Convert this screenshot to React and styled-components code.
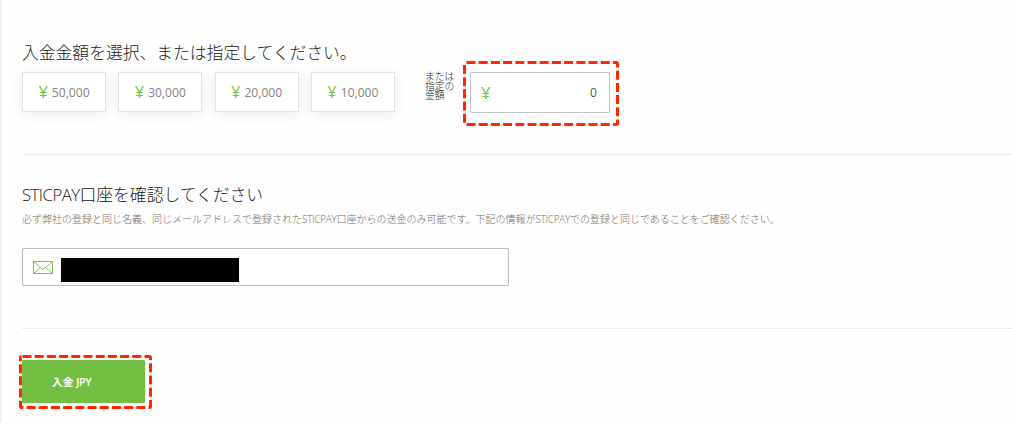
import React from "react"
import styled, { createGlobalStyle } from "styled-components"

const amounts = ["50,000", "30,000", "20,000", "10,000"]

const Outline = ({ width, height, x, y }) => (
  <OutlineSvg $x={x} $y={y} width={width} height={height}>
    <rect
      x="1.5"
      y="1.5"
      width={width - 3}
      height={height - 3}
      rx="1"
      fill="none"
      stroke="#ff2600"
      strokeWidth="3"
      strokeDasharray="9 3.2"
      strokeDashoffset="-1"
    />
  </OutlineSvg>
)

const App = () => {
  return (
    <Page>
      <GlobalStyle />
      <AmountSection>
        <Title>入金金額を選択、または指定してください。</Title>
        <AmountRow>
          {amounts.map(amount => (
            <AmountCard key={amount}>
              <Yen>¥</Yen>
              {amount}
            </AmountCard>
          ))}
          <OrLabel>
            または
            <br />
            指定の
            <br />
            金額
          </OrLabel>
          <AmountField>
            <Yen>¥</Yen>
            <AmountValue>0</AmountValue>
            <Outline x={-8} y={-12} width={156} height={65} />
          </AmountField>
        </AmountRow>
      </AmountSection>
      <AccountSection>
        <Title>
          <Latin $spacing="-0.55px">STICPAY</Latin>口座を確認してください
        </Title>
        <Note>
          必ず弊社の登録と同じ名義、同じメールアドレスで登録された
          <Latin>STICPAY</Latin>
          口座からの送金のみ可能です。下記の情報が
          <Latin>STICPAY</Latin>での登録と同じであることをご確認ください。
        </Note>
        <EmailField>
          <EmailIcon viewBox="0 0 20 13">
            <path d="M.5.5h19v12H.5zM.5.5l8 7q1.5 1.2 3 0l8-7M.5 12.5l7-6M19.5 12.5l-7-6" />
          </EmailIcon>
          <Redacted />
        </EmailField>
      </AccountSection>
      <SubmitSection>
        <SubmitButton>
          入金 <Latin $spacing="-0.4px" $weight={600}>JPY</Latin>
          <Outline x={-3} y={-5} width={133} height={54} />
        </SubmitButton>
      </SubmitSection>
    </Page>
  )
}

export default App

const GlobalStyle = createGlobalStyle`
  body {
    margin: 0;
    background: #fefefe;
    overflow: hidden;
  }
  * {
    box-sizing: border-box;
  }
`
const Page = styled.main`
  height: 423px;
  padding-left: 20px;
  border-left: 2px solid #f1f1f1;
  color: #222;
  font-family: "Open Sans", "Noto Sans CJK JP", sans-serif;
  font-weight: 300;
`
const AmountSection = styled.section`
  height: 155px;
  padding-top: 40px;
  border-bottom: 1px solid #ececec;
`
const Title = styled.h2`
  margin: 0;
  height: 25px;
  font-size: 16.8px;
  font-weight: 300;
  line-height: 25px;
  white-space: nowrap;
`
const AmountRow = styled.div`
  display: flex;
  align-items: flex-start;
  margin-top: 7px;
`
const AmountCard = styled.button`
  display: flex;
  align-items: center;
  justify-content: center;
  gap: 4px;
  width: 84px;
  height: 40px;
  margin: 0 12.3px 0 0;
  padding: 0;
  border: 1px solid #e2e3e5;
  background: #fff;
  box-shadow: 0 2px 13px rgba(0, 0, 0, 0.08);
  color: #858585;
  font-family: "Open Sans", sans-serif;
  font-size: 12.1px;
`
const Yen = styled.span`
  color: #72bf44;
  font-family: "Open Sans", sans-serif;
  font-size: 16.5px;
  font-weight: 400;
  line-height: 20px;
  transform: translateY(-0.5px);
`
const OrLabel = styled.div`
  width: 45px;
  margin-left: 17.8px;
  font-size: 9.8px;
  line-height: 9.7px;
`
const AmountField = styled.div`
  position: relative;
  display: flex;
  align-items: center;
  justify-content: space-between;
  width: 140px;
  height: 41px;
  padding: 0 12px 0 10px;
  border: 1px solid #c5c5cb;
  border-radius: 1px;
  background: #fff;
`
const AmountValue = styled.span`
  color: #555;
  font-size: 12px;
  font-weight: 400;
`
const OutlineSvg = styled.svg`
  position: absolute;
  left: ${({ $x }) => $x}px;
  top: ${({ $y }) => $y}px;
  pointer-events: none;
`
const AccountSection = styled.section`
  height: 174px;
  padding-top: 27px;
  border-bottom: 1px solid #ececec;
`
const Latin = styled.span`
  font-weight: ${({ $weight }) => $weight || 300};
  letter-spacing: ${({ $spacing }) => $spacing || "-0.3px"};
`
const Note = styled.p`
  margin: 3px 0 0;
  height: 18px;
  color: #6f6f6f;
  font-size: 10px;
  line-height: 18px;
  white-space: nowrap;
`
const EmailField = styled.div`
  display: flex;
  align-items: center;
  width: 487px;
  height: 38px;
  margin-top: 20px;
  padding-left: 10px;
  border: 1px solid #bdbdbd;
  border-radius: 1px;
  background: #fff;
`
const EmailIcon = styled.svg`
  width: 20px;
  height: 13px;
  fill: none;
  stroke: #7cc255;
  stroke-width: 1;
`
const Redacted = styled.span`
  width: 178px;
  height: 24px;
  margin: 5px 0 0 8px;
  background: #000;
`
const SubmitSection = styled.section`
  padding-top: 31px;
`
const SubmitButton = styled.button`
  position: relative;
  display: block;
  width: 123px;
  height: 43px;
  padding: 0 0 0 30px;
  border: 0;
  border-radius: 1px;
  background: #72bf44;
  color: #fff;
  font-family: "Open Sans", "Noto Sans CJK JP", sans-serif;
  font-size: 10.7px;
  font-weight: 600;
  text-align: left;
`
